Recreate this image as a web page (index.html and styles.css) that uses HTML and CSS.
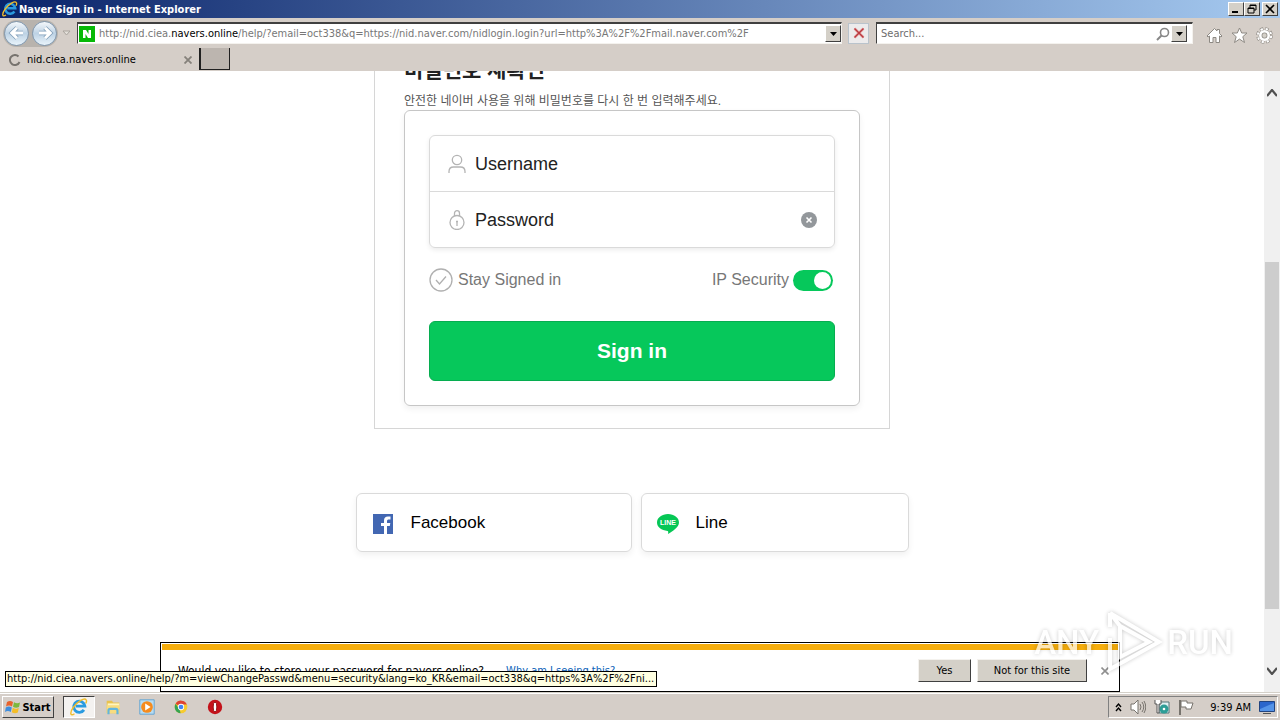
FILE: index.html
```html
<!DOCTYPE html>
<html lang="ko">
<head>
    <meta charset="UTF-8">
    <meta name="viewport" content="width=device-width, initial-scale=1.0">
    <title>Naver Sign in - Internet Explorer</title>
    <link rel="stylesheet" href="styles.css">
</head>
<body>
    <svg class="defs" width="0" height="0">
        <symbol id="ie" viewBox="0 0 20 20">
            <path d="M15.500 13.200a6.200 6.200 0 1 1 1-4.200H6.500" fill="none" stroke="#2a9be0" stroke-width="3.200"/>
            <path d="M5 17.500C0 21-.5 16 4 10S16-1 18 2c.7 1 .3 2.500-.5 4" fill="none" stroke="#f0bd2c" stroke-width="1.600"/>
        </symbol>
    </svg>

    <header class="titlebar">
        <svg class="title-icon" viewBox="0 0 20 20"><use href="#ie"/></svg>
        <span class="title-text">Naver Sign in - Internet Explorer</span>
        <div class="window-buttons">
            <button class="win-btn" aria-label="Minimize"><svg viewBox="0 0 12 10"><path d="M2 8h6" stroke="#000" stroke-width="2"/></svg></button>
            <button class="win-btn" aria-label="Restore"><svg viewBox="0 0 12 10"><path d="M4 4V1h6v5H8M4 1.500h6M2 4.500h6M2 4v5h6V4z" fill="none" stroke="#000"/></svg></button>
            <button class="win-btn close" aria-label="Close"><svg viewBox="0 0 12 10"><path d="M2 1l8 8M10 1L2 9" stroke="#000" stroke-width="1.600"/></svg></button>
        </div>
    </header>

    <nav class="navbar">
        <div class="history">
            <button class="round-btn" aria-label="Back"><svg viewBox="0 0 24 24"><path d="M12 5l-7 7 7 7M5.500 12H20" fill="none" stroke="#7f9db8" stroke-width="6"/><path d="M12 5l-7 7 7 7M5.500 12H20" fill="none" stroke="#fff" stroke-width="4"/></svg></button>
            <button class="round-btn" aria-label="Forward"><svg viewBox="0 0 24 24"><path d="M12 5l7 7-7 7M18.500 12H4" fill="none" stroke="#7f9db8" stroke-width="6"/><path d="M12 5l7 7-7 7M18.500 12H4" fill="none" stroke="#fff" stroke-width="4"/></svg></button>
        </div>
        <svg class="history-arrow" viewBox="0 0 9 6"><path d="M1 1h7L4.500 5z" fill="#e4e0da" stroke="#aaa59e"/></svg>
        <div class="address">
            <svg class="favicon" viewBox="0 0 16 16"><rect width="16" height="16" fill="#07b907"/><path d="M4 12V4h3l2.500 4V4H12v8H9L6.500 8v4z" fill="#fff"/></svg>
            <div class="url" role="textbox" aria-label="Address">http://nid.ciea.<span class="domain">navers.online</span>/help/?email=oct338&amp;q=https://nid.naver.com/nidlogin.login?url=http%3A%2F%2Fmail.naver.com%2F</div>
            <button class="drop-btn" aria-label="Show address list"><svg viewBox="0 0 7 4"><path d="M0 0h7L3.500 4z"/></svg></button>
        </div>
        <button class="stop-btn" aria-label="Stop"><svg viewBox="0 0 12 12"><path d="M1.500 1.500l9 9M10.500 1.500l-9 9" stroke="#e8a5a5" stroke-width="2.600"/><path d="M1.500 1.500l9 9M10.500 1.500l-9 9" stroke="#b83a40" stroke-width="1.400"/></svg></button>
        <div class="search">
            <input class="search-input" type="text" placeholder="Search..." aria-label="Search">
            <svg class="search-icon" viewBox="0 0 14 14"><circle cx="8.500" cy="5.500" r="4" fill="none" stroke="#878787" stroke-width="1.600"/><path d="M5.500 8.500L1 13" stroke="#878787" stroke-width="2"/></svg>
            <button class="drop-btn" aria-label="Search options"><svg viewBox="0 0 7 4"><path d="M0 0h7L3.500 4z"/></svg></button>
        </div>
        <div class="tools">
            <button class="tool-btn" aria-label="Home"><svg viewBox="0 0 17 17"><path d="M1 9l7.500-7.500L11 4V2.500h2.500V6.500L16 9l-1 1-1.500-1v6.500h-3.500v-5H7v5H3.500V9L2 10z" fill="#fff" stroke="#8d8983"/></svg></button>
            <button class="tool-btn" aria-label="Favorites"><svg viewBox="0 0 17 17"><path d="M8.500 1l2.200 5h5.300l-4.200 3.700 1.700 5.800-5-3.400-5 3.400 1.700-5.800L1 6h5.300z" fill="#fff" stroke="#8d8983"/></svg></button>
            <button class="tool-btn" aria-label="Tools"><svg viewBox="0 0 17 17"><circle cx="8.500" cy="8.500" r="6.300" fill="none" stroke="#8d8983" stroke-width="4" stroke-dasharray="3 1.948"/><circle cx="8.500" cy="8.500" r="6" fill="none" stroke="#fff" stroke-width="3.400" stroke-dasharray="2 2.712" stroke-dashoffset="-.4"/><circle cx="8.500" cy="8.500" r="4" fill="#d4d0c8" stroke="#8d8983" stroke-width="3.600"/><circle cx="8.500" cy="8.500" r="4.200" fill="none" stroke="#fff" stroke-width="2.600"/></svg></button>
        </div>
    </nav>

    <div class="tabbar">
        <div class="tab">
            <svg class="spinner" viewBox="0 0 12 12"><path d="M9.500 2.500A5 5 0 1 0 10.500 8" fill="none" stroke="#77736e" stroke-width="2"/></svg>
            <span class="tab-title">nid.ciea.navers.online</span>
            <button class="x-btn" aria-label="Close tab"><svg viewBox="0 0 8 8"><path d="M.5.5l7 7M7.500.5l-7 7" stroke="#85817b" stroke-width="1.800"/></svg></button>
        </div>
        <button class="new-tab" aria-label="New tab"></button>
    </div>

    <div class="viewport">
        <main class="page">
            <section class="card">
                <h1 class="card-title">비밀번호 재확인</h1>
                <p class="card-desc">안전한 네이버 사용을 위해 비밀번호를 다시 한 번 입력해주세요.</p>
                <div class="panel">
                    <div class="fields">
                        <div class="field">
                            <svg class="field-icon" viewBox="0 0 20 20"><circle cx="10" cy="6" r="4.700"/><path d="M2 19v-1.500C2 14.500 4 13 6.500 13h7c2.500 0 4.500 1.500 4.500 4.500V19"/></svg>
                            <input class="field-input" type="text" placeholder="Username" aria-label="Username">
                        </div>
                        <div class="field">
                            <svg class="field-icon" viewBox="0 0 20 20"><circle cx="10" cy="12.500" r="7"/><path d="M7.500 6V3.200a2.500 2.500 0 0 1 5 0V6M10 11v5M9 11.500h2"/></svg>
                            <input class="field-input" type="text" placeholder="Password" aria-label="Password">
                            <button class="clear-btn" aria-label="Clear"><svg viewBox="0 0 16 16"><circle cx="8" cy="8" r="8" fill="#93979b"/><path d="M5.500 5.500l5 5M10.500 5.500l-5 5" stroke="#fff" stroke-width="1.600"/></svg></button>
                        </div>
                    </div>
                    <div class="options">
                        <label class="stay">
                            <input class="stay-check" type="checkbox">
                            <svg class="stay-icon" viewBox="0 0 24 24"><circle cx="12" cy="12" r="11"/><path d="M7 12l3.500 4L17 8.500"/></svg>
                            Stay Signed in
                        </label>
                        <label class="ip">
                            IP Security
                            <input class="switch" type="checkbox" checked>
                        </label>
                    </div>
                    <button class="signin">Sign in</button>
                </div>
            </section>
            <div class="social">
                <a class="social-link facebook" href="#">
                    <svg class="social-icon" viewBox="0 0 20 20"><rect width="20" height="20" fill="#4267b2"/><path d="M11 20v-8H8V9h3V6.500C11 3.800 12.500 2.500 15 2.500h2.500V5.500H16c-1.500 0-2 .6-2 1.700V9h3.300l-.5 3H14v8z" fill="#fff"/></svg>
                    Facebook
                </a>
                <a class="social-link line" href="#">
                    <svg class="social-icon" viewBox="0 0 22 20"><path d="M11 0c6 0 11 3.600 11 8.500 0 5-6.500 8.800-11 11.500.3-1.500.5-2.800-.5-3C4.500 16.300 0 13 0 8.500 0 3.600 5 0 11 0z" fill="#06c755"/><text class="line-mark" x="11" y="11" text-anchor="middle">LINE</text></svg>
                    Line
                </a>
            </div>
        </main>
        <div class="scrollbar">
            <svg class="scroll-arrow" viewBox="0 0 10 8"><path d="M0 7l5-6 5 6" fill="none" stroke="#505050" stroke-width="2.200"/></svg>
            <div class="scroll-before"></div>
            <div class="scroll-thumb"></div>
            <div class="scroll-after"></div>
            <svg class="scroll-arrow" viewBox="0 0 10 8"><path d="M0 1l5 6 5-6" fill="none" stroke="#505050" stroke-width="2.200"/></svg>
        </div>

        <div class="notice">
            <span class="notice-text">Would you like to store your password for navers.online?</span>
            <a class="notice-link" href="#">Why am I seeing this?</a>
            <button class="classic-btn">Yes</button>
            <button class="classic-btn wide">Not for this site</button>
            <button class="x-btn" aria-label="Close"><svg viewBox="0 0 8 8"><path d="M.5.5l7 7M7.500.5l-7 7" stroke="#909090" stroke-width="1.600"/></svg></button>
        </div>
        <div class="status">http://nid.ciea.navers.online/help/?m=viewChangePasswd&amp;menu=security&amp;lang=ko_KR&amp;email=oct338&amp;q=https%3A%2F%2Fni...</div>
        <div class="watermark">
            <span>ANY</span>
            <svg class="watermark-icon" viewBox="0 0 60 64"><path d="M7 3v14M7 28v31l13-7M7 3l49 29-36 20M17 16v31l29-15zM7 3l10 13" fill="none" stroke="#fff" stroke-width="4"/></svg>
            <span>RUN</span>
        </div>
    </div>

    <footer class="taskbar">
        <button class="start">
            <svg class="start-icon" viewBox="0 0 16 16"><path d="M2 3q3-2 6 0L7 7.500q-3-2-6 0z" fill="#e8622c"/><path d="M9 3.200q3 2 6 .3L14 8q-3 1.500-6-.2z" fill="#7cb83c"/><path d="M.8 8.500q3-2 6 0L5.800 13q-3-2-5.800 0z" fill="#3e8ddd"/><path d="M7.800 8.800q3 2 6 .3l-1 4.500q-3 1.500-6-.3z" fill="#f4bd27"/></svg>
            Start
        </button>
        <button class="task active" aria-label="Internet Explorer"><svg viewBox="0 0 20 20"><use href="#ie"/></svg></button>
        <button class="task" aria-label="Explorer"><svg viewBox="0 0 20 20"><path d="M3 3h6l1 2h7v12H3z" fill="#e9c24d"/><path d="M4 6h13v5H4z" fill="#fff5c0"/><path d="M3 8h14v9H3z" fill="#f8dc7e"/><path d="M5 18v-4q0-2 2-2h6q2 0 2 2v4" fill="none" stroke="#62b5de" stroke-width="2.400"/></svg></button>
        <button class="task" aria-label="Media Player"><svg viewBox="0 0 20 20"><path d="M2 2h16v16H2z" fill="#b7dcf2" stroke="#5fa3d3"/><circle cx="10" cy="10" r="6.500" fill="#f58b1e"/><path d="M8 6l6 4-6 4z" fill="#fff"/></svg></button>
        <button class="task" aria-label="Chrome"><svg viewBox="0 0 20 20"><circle cx="10" cy="10" r="7" fill="#f7cb2e"/><path d="M10 10L4 6.400A7 7 0 0 1 16.500 7.200H10z" fill="#de4334"/><path d="M4 6.400L8.500 13 9.500 17A7 7 0 0 1 4 6.400z" fill="#35a352"/><circle cx="10" cy="10" r="3.500" fill="#fff"/><circle cx="10" cy="10" r="2.600" fill="#4285f4"/></svg></button>
        <button class="task" aria-label="Opera"><svg viewBox="0 0 20 20"><circle cx="10" cy="10" r="8" fill="#c4121a"/><ellipse cx="10" cy="10" rx="2" ry="5.500" fill="#fff" stroke="#8e0b10"/></svg></button>
        <div class="tray">
            <svg class="tray-more" viewBox="0 0 7 9"><path d="M1 4l2.500-3L6 4M1 8l2.500-3L6 8" fill="none" stroke="#000" stroke-width="1.400"/></svg>
            <svg class="tray-icon" viewBox="0 0 16 16"><path d="M1 5h3l4-4v14l-4-4H1z" fill="#fff" stroke="#77736d"/><path d="M10 5q2 3 0 6M12 3q3.500 5 0 10M14 2q3.500 6 0 12" fill="none" stroke="#77736d"/></svg>
            <svg class="tray-icon" viewBox="0 0 16 16"><path d="M5 3h10v11H5z" fill="#dff0f2" stroke="#527579"/><circle cx="10" cy="10" r="4.500" fill="#2d9d96"/><circle cx="10" cy="10" r="1.300" fill="#fff"/><path d="M1 1v4h2v9h2V5h2V1" fill="#fff" stroke="#555"/></svg>
            <svg class="tray-icon" viewBox="0 0 16 16"><path d="M2 1v15" stroke="#77736d" stroke-width="2"/><path d="M3 2h6v2h6l-2 6H8V8H3z" fill="#fff" stroke="#77736d"/></svg>
            <span class="clock">9:39 AM</span>
            <svg class="tray-icon desktop" viewBox="0 0 16 16"><path d="M.5 2.500h15v10H.5z" fill="#2b66cc" stroke="#22447f"/><path d="M1 10L15 4v8H1z" fill="#5594e8"/><path d="M4 14.500h8" stroke="#555"/></svg>
        </div>
    </footer>
</body>
</html>
```

FILE: styles.css
```css
* {
    box-sizing: border-box;
}
body {
    margin: 0;
    height: 100vh;
    display: flex;
    flex-direction: column;
    overflow: hidden;
    background-color: white;
    font-family: 'DejaVu Sans Condensed', 'DejaVu Sans', sans-serif;
    font-size: 11px;
    color: #000;
}
button, input {
    font-family: inherit;
    font-size: inherit;
    color: inherit;
    margin: 0;
}
button {
    display: flex;
    align-items: center;
    justify-content: center;
    flex: none;
    padding: 0;
    border: none;
    background: none;
}
svg {
    flex: none;
}
.defs {
    position: absolute;
}

/* title bar */
.titlebar {
    display: flex;
    align-items: center;
    height: 18px;
    flex: none;
    padding: 0 2px;
    background: linear-gradient(to right, #0a246a, #a6caf0);
}
.title-icon {
    width: 16px;
    height: 16px;
}
.title-text {
    flex: 1;
    margin-left: 1px;
    color: white;
    font-weight: bold;
}
.window-buttons {
    display: flex;
}
.win-btn {
    width: 16px;
    height: 14px;
    background-color: #d4d0c8;
    border: 1px solid;
    border-color: #fff #404040 #404040 #fff;
}
.win-btn svg {
    width: 12px;
    height: 10px;
}
.win-btn.close {
    margin-left: 2px;
}

/* navigation bar */
.navbar {
    display: flex;
    align-items: center;
    height: 30px;
    flex: none;
    padding: 0 7px 0 3px;
    background-color: #d5cec8;
}
.history {
    display: flex;
    gap: 3px;
    padding: 1px;
    border-radius: 14px;
    background-color: #b8b3ad;
}
.round-btn {
    width: 25px;
    height: 25px;
    border: 1px solid #8097ad;
    border-radius: 50%;
    background: linear-gradient(#f4f8fb, #bdd2e4 50%, #e9f4fb);
}
.round-btn svg {
    width: 18px;
    height: 18px;
}
.history-arrow {
    width: 9px;
    height: 6px;
    margin: 0 6px 0 4px;
}
.address, .search {
    display: flex;
    align-items: center;
    height: 22px;
    background-color: white;
    border: 1px solid;
    border-color: #404040 #f4f2ee #f4f2ee #404040;
    border-top-width: 2px;
}
.address {
    flex: 763;
    min-width: 0;
}
.favicon {
    width: 16px;
    height: 16px;
    margin-left: 1px;
}
.url {
    flex: 1;
    min-width: 0;
    margin-left: 4px;
    overflow: hidden;
    white-space: nowrap;
    color: #777;
}
.domain {
    color: #000;
}
.drop-btn {
    width: 16px;
    height: 17px;
    background-color: #d4d0c8;
    border: 1px solid;
    border-color: #fff #404040 #404040 #fff;
}
.drop-btn svg {
    width: 7px;
    height: 4px;
}
.stop-btn {
    width: 21px;
    height: 21px;
    margin: 0 7px 0 6px;
    background-color: #ecebec;
    border: 1px solid #b9c3cc;
}
.stop-btn svg {
    width: 12px;
    height: 12px;
}
.search {
    flex: 310;
    min-width: 0;
    padding-right: 5px;
}
.search-input {
    flex: 1;
    min-width: 0;
    padding: 0 4px;
    border: none;
    outline: none;
    background: none;
}
.search-input::placeholder {
    color: #6d6d6d;
    opacity: 1;
}
.search-icon {
    width: 14px;
    height: 14px;
    margin-right: 1px;
}
.tools {
    display: flex;
    gap: 8px;
    margin: 4px 0 0 13px;
}
.tool-btn svg {
    width: 17px;
    height: 17px;
}

/* tabs */
.tabbar {
    display: flex;
    height: 23px;
    flex: none;
    background-color: #d5cec8;
}
.tab {
    display: flex;
    align-items: center;
    width: 199px;
    padding: 0 7px 0 9px;
}
.spinner {
    width: 12px;
    height: 12px;
}
.tab-title {
    flex: 1;
    margin-left: 6px;
}
.x-btn svg {
    width: 8px;
    height: 8px;
}
.new-tab {
    width: 31px;
    height: 22px;
    background-color: #bcb5af;
    border: solid #202020;
    border-width: 0 1px 1px 2px;
}

/* page */
.viewport {
    position: relative;
    display: flex;
    flex: 1;
    min-height: 0;
    overflow: hidden;
}
.page {
    flex: 1;
    display: flex;
    flex-direction: column;
    align-items: center;
    margin-top: -50px;
    font-family: 'Liberation Sans', 'Noto Sans CJK KR', sans-serif;
}
.card {
    width: 516px;
    padding: 34px 29px 22px;
    border: 1px solid #d6d6d6;
}
.card-title {
    margin: 0;
    font-size: 21px;
    line-height: 28px;
    color: #222;
}
.card-desc {
    margin: 8px 0 0;
    font-size: 12px;
    line-height: 18px;
    color: #555;
}
.panel {
    padding: 24px;
    border: 1px solid #c6c6c6;
    border-radius: 6px;
    box-shadow: 0 3px 6px rgba(0,0,0,0.06);
}
.fields {
    border: 1px solid #dadada;
    border-radius: 6px;
    box-shadow: 0 2px 5px rgba(0,0,0,0.08);
}
.field {
    display: flex;
    align-items: center;
    height: 55px;
    padding: 0 17px;
}
.field + .field {
    height: 56px;
    border-top: 1px solid #dadada;
}
.field-icon {
    width: 20px;
    height: 20px;
    fill: none;
    stroke: #b4b4b4;
    stroke-width: 1.3;
}
.field-input {
    flex: 1;
    min-width: 0;
    height: 40px;
    padding: 2px 8px 0;
    border: none;
    outline: none;
    background: none;
    font-size: 18px;
}
.field-input::placeholder {
    color: #222;
    opacity: 1;
}
.clear-btn svg {
    width: 16px;
    height: 16px;
}
.options {
    display: flex;
    align-items: center;
    justify-content: space-between;
    height: 24px;
    margin: 20px 0 29px;
    padding-right: 2px;
    font-size: 16px;
    color: #777;
}
.stay, .ip {
    display: flex;
    align-items: center;
}
.stay {
    gap: 5px;
}
.ip {
    gap: 4px;
}
.stay-check {
    position: absolute;
    opacity: 0;
}
.stay-icon {
    width: 24px;
    height: 24px;
    fill: none;
    stroke: #b0b0b0;
    stroke-width: 1.3;
}
.switch {
    appearance: none;
    display: flex;
    justify-content: flex-end;
    width: 40px;
    height: 21px;
    padding: 2px;
    border-radius: 11px;
    background-color: #06c85b;
}
.switch::before {
    content: '';
    width: 17px;
    height: 17px;
    border-radius: 50%;
    background-color: white;
}
.signin {
    width: 100%;
    height: 60px;
    border: 1px solid #06ad50;
    border-radius: 6px;
    background-color: #06c85b;
    color: white;
    font-size: 21px;
    font-weight: bold;
}
.social {
    display: flex;
    gap: 9px;
    margin-top: 64px;
}
.social-link {
    display: flex;
    align-items: center;
    gap: 17px;
    height: 59px;
    padding: 0 15px;
    border: 1px solid #dadada;
    border-radius: 6px;
    box-shadow: 0 3px 6px rgba(0,0,0,0.06);
    color: #000;
    font-size: 17px;
    text-decoration: none;
}
.facebook {
    width: 276px;
}
.line {
    width: 268px;
}
.social-icon {
    width: 22px;
    height: 20px;
    margin-top: 3px;
}
.line-mark {
    font-size: 7px;
    font-weight: bold;
    fill: white;
}
.scrollbar {
    display: flex;
    flex-direction: column;
    align-items: center;
    width: 16px;
    padding: 18px 1px 17px;
    background-color: #f0f0f0;
}
.scroll-arrow {
    width: 10px;
    height: 8px;
}
.scroll-before {
    flex: 165;
}
.scroll-thumb {
    flex: 347;
    width: 100%;
    background-color: #cdcdcd;
}
.scroll-after {
    flex: 58;
}

/* password prompt over the page */
.notice {
    position: absolute;
    left: 160px;
    right: 160px;
    bottom: 0;
    display: flex;
    align-items: center;
    height: 50px;
    padding: 7px 10px 0 17px;
    border: 1px solid #000;
    background: linear-gradient(#f5ad0c, #f5ad0c) 1px 1px / 956px 6px no-repeat white;
}
.notice-text {
    font-size: 12px;
}
.notice-link {
    flex: 1;
    margin-left: 22px;
    color: #0c62b8;
    text-decoration: none;
}
.classic-btn {
    width: 53px;
    height: 23px;
    margin-right: 6px;
    background-color: #d4d0c8;
    border: 1px solid;
    border-color: #f4f2ee #404040 #404040 #f4f2ee;
}
.classic-btn.wide {
    width: 110px;
    margin-right: 14px;
}
.status {
    position: absolute;
    left: 5px;
    bottom: 5px;
    height: 16px;
    padding: 0 2px 0 1px;
    border: 1px solid #000;
    background-color: #ffffe1;
    line-height: 14px;
    white-space: nowrap;
}
.watermark {
    position: absolute;
    right: 47px;
    bottom: 18px;
    display: flex;
    align-items: center;
    gap: 4px;
    color: white;
    font-family: Roboto, sans-serif;
    font-size: 33px;
    font-weight: 500;
    text-shadow: 0 0 4px rgba(0,0,0,0.3);
    opacity: 0.7;
}
.watermark-icon {
    width: 60px;
    height: 64px;
    filter: drop-shadow(0 0 2px rgba(0,0,0,0.3));
}

/* taskbar */
.taskbar {
    display: flex;
    align-items: center;
    height: 28px;
    flex: none;
    padding: 1px 2px 0;
    border-top: 1px solid #d4d0c8;
    box-shadow: inset 0 1px #fff;
    background-color: #d5cec8;
}
.start {
    gap: 1px;
    width: 52px;
    height: 22px;
    margin-right: 9px;
    border: 1px solid;
    border-color: #fff #404040 #404040 #fff;
    font-weight: bold;
}
.start-icon {
    width: 16px;
    height: 16px;
}
.task {
    width: 32px;
    height: 22px;
    margin-right: 2px;
}
.task svg {
    width: 18px;
    height: 18px;
}
.task.active {
    border: 1px solid;
    border-color: #404040 #fff #fff #404040;
    background-color: #f4f2f0;
}
.tray {
    display: flex;
    align-items: center;
    gap: 8px;
    height: 22px;
    margin-left: auto;
    padding: 0 2px 0 6px;
    border: 1px solid;
    border-color: #808080 #fff #fff #808080;
}
.tray-more {
    width: 7px;
    height: 11px;
}
.tray-icon {
    width: 16px;
    height: 16px;
}
.clock {
    margin-left: 8px;
}
```
